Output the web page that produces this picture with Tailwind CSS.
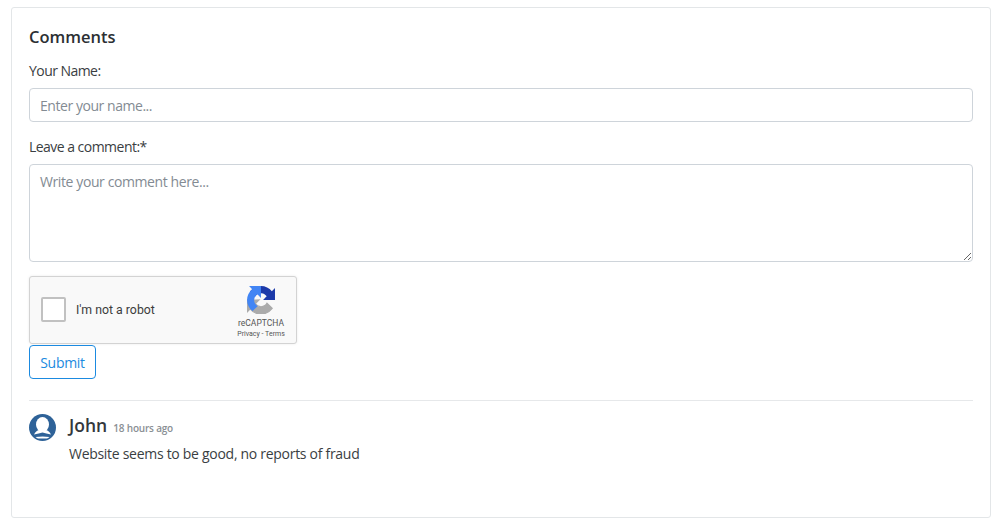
<!DOCTYPE html>
<html><head><meta charset="utf-8"><script src="https://cdn.jsdelivr.net/npm/@tailwindcss/browser@4"></script></head>
<body class="bg-white font-['Open_Sans','Noto_Sans',sans-serif] text-[#212529] w-[999px] h-[527px] overflow-hidden">
<main class="mt-[7px] ml-[11px] w-[980px] h-[511px] border border-[#e3e6e8] rounded-[3px] px-[17px] pt-[17px]">
<h2 class="text-[16.5px] leading-[24px] font-semibold m-0 text-[#2b2f33]">Comments</h2>
<label for="n" class="block mt-[12px] text-[14px] leading-[20px] tracking-[-0.55px] text-[#3a3e42]">Your Name:</label>
<input id="n" placeholder="Enter your name..." class="block mt-[7px] w-[944px] h-[34px] border border-[#ced4da] rounded-[4px] px-[10px] text-[14px] tracking-[-0.45px] placeholder:text-[#838b93] outline-none">
<label for="c" class="block mt-[15px] text-[14px] leading-[20px] tracking-[-0.53px] text-[#3a3e42]">Leave a comment:*</label>
<textarea id="c" placeholder="Write your comment here..." class="block mt-[7px] w-[944px] h-[98px] border border-[#ced4da] rounded-[4px] px-[10px] py-[7px] text-[14px] leading-[20px] tracking-[-0.4px] placeholder:text-[#838b93] outline-none resize-y"></textarea>
<div class="mt-[14px] w-[268px] h-[68px] bg-[#f9f9f9] border border-[#d3d3d3] rounded-[3px] shadow-[0_0_3px_rgba(0,0,0,0.08)] flex items-start font-['Roboto',sans-serif]">
  <div class="mt-[20px] ml-[11px] w-[25px] h-[25px] bg-white border-2 border-[#c1c1c1] rounded-[2px]"></div>
  <span class="mt-[25px] ml-[10px] text-[12.3px] leading-[16px] text-[#3c3c3c]">I'm not a robot</span>
  <div class="ml-auto w-[70px] pt-[9px] flex flex-col items-center">
    <svg width="28" height="28" viewBox="0 0 64 64" class="-ml-[1px]">
      <g transform="rotate(180 32 32)"><path d="M64 31.955l-.033-1.37V4.687l-7.16 7.16C50.948 4.674 42.033.093 32.05.093c-10.4 0-19.622 4.96-25.458 12.64l11.736 11.86a15.55 15.55 0 0 1 4.754-5.334c2.05-1.6 4.952-2.906 8.968-2.906.485 0 .86.057 1.135.163 4.976.393 9.288 3.14 11.828 7.124l-8.307 8.307c10.522-.04 22.4-.066 29.834.001" fill="#ababab" stroke="#ababab" stroke-width="3"/></g>
      <path d="M64 31.955l-.033-1.37V4.687l-7.16 7.16C50.948 4.674 42.033.093 32.05.093c-10.4 0-19.622 4.96-25.458 12.64l11.736 11.86a15.55 15.55 0 0 1 4.754-5.334c2.05-1.6 4.952-2.906 8.968-2.906.485 0 .86.057 1.135.163 4.976.393 9.288 3.14 11.828 7.124l-8.307 8.307c10.522-.04 22.4-.066 29.834.001" fill="#1c3aa9"/>
      <g transform="rotate(-90 32 32)"><path d="M64 31.955l-.033-1.37V4.687l-7.16 7.16C50.948 4.674 42.033.093 32.05.093c-10.4 0-19.622 4.96-25.458 12.64l11.736 11.86a15.55 15.55 0 0 1 4.754-5.334c2.05-1.6 4.952-2.906 8.968-2.906.485 0 .86.057 1.135.163 4.976.393 9.288 3.14 11.828 7.124l-8.307 8.307c10.522-.04 22.4-.066 29.834.001" fill="#4285f4"/></g>
    </svg>
    <div class="text-[8.5px] leading-[10px] mt-[4px] text-[#555]">reCAPTCHA</div>
    <div class="text-[7px] leading-[10px] mt-[1px] text-[#555]">Privacy - Terms</div>
  </div>
</div>
<button class="block mt-[1px] w-[67px] h-[34px] border border-[#1b8ae0] rounded-[4px] text-[#1b8ae0] text-[14px] tracking-[-0.29px] bg-white">Submit</button>
<hr class="mt-[21px] border-0 border-t border-[#e6e8ea] w-[944px]">
<div class="mt-[13px] flex gap-[13px]">
  <svg width="27" height="27" viewBox="0 0 27 27" class="shrink-0">
    <circle cx="13.5" cy="13.5" r="13.5" fill="#2e6298"/>
    <ellipse cx="13.5" cy="10.5" rx="6.5" ry="7.5" fill="#fff"/>
    <path d="M5 20.5 Q7 16.5 10 16 H17 Q20 16.5 22 20.5 Q17 19.5 13.5 18.5 Q10 19.5 5 20.5Z" fill="#fff"/>
    <path d="M6.5 23 Q13.5 21.8 20.5 23 Q19 24.3 18 24.6 H9 Q8 24.3 6.5 23Z" fill="#fff"/>
  </svg>
  <div class="-mt-[1px]">
    <div class="leading-[24px]"><span class="text-[17.5px] font-semibold text-[#33373b]">John</span> <span class="ml-[2px] text-[10px] font-semibold text-[#8a8f94] tracking-[-0.2px]">18 hours ago</span></div>
    <p class="mt-[4px] text-[14px] leading-[20px] tracking-[-0.29px] text-[#3a3e42]">Website seems to be good, no reports of fraud</p>
  </div>
</div>
</main>
</body></html>
